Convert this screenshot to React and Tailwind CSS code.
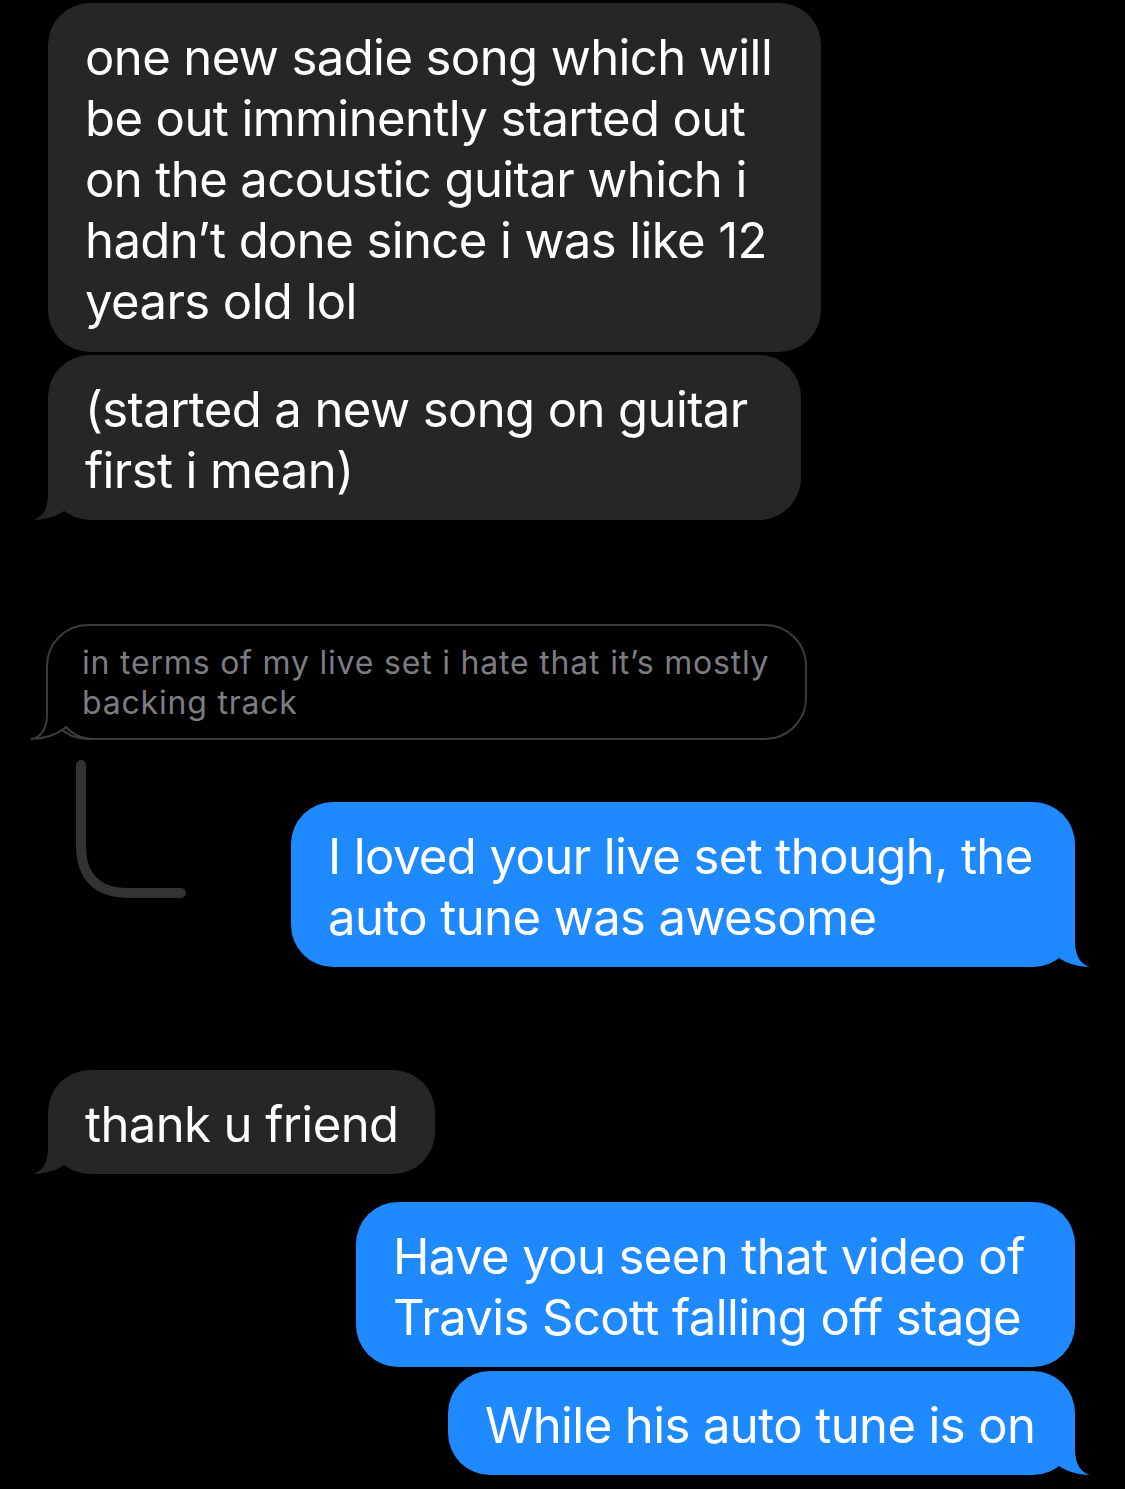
import React from 'react';

const GRAY = 'bg-[#262629]';
const BLUE = 'bg-[#1f8aff]';

const TailPath = 'M15 0 V25 C15 40 8 48 0 50 C12 50 26 46 35 38 C42 46 50 50 62 50 H80 V0 Z';

const Tail = ({ side, color }) => (
  <svg
    width="80"
    height="50"
    viewBox="0 0 80 50"
    className={
      side === 'left'
        ? 'absolute left-[-15px] bottom-0'
        : 'absolute right-[-15px] bottom-0 -scale-x-100'
    }
  >
    <path d={TailPath} fill={color} />
  </svg>
);

const Bubble = ({ lines, side = 'left', tail = false, width, className = '' }) => {
  const isLeft = side === 'left';
  return (
    <div
      className={`relative rounded-[42px] pt-[24px] pb-[19px] pl-[37px] ${
        isLeft ? `${GRAY} self-start ml-[48px]` : `${BLUE} self-end mr-[50px]`
      } ${width} ${className}`}
    >
      {tail && <Tail side={side} color={isLeft ? '#262629' : '#1f8aff'} />}
      <div className="relative text-white text-[49px] leading-[61px] tracking-[-0.012em] whitespace-nowrap">
        {lines.map((l) => (
          <div key={l}>{l}</div>
        ))}
      </div>
    </div>
  );
};

const QuotedBubble = () => (
  <div className="relative self-start ml-[46px] mt-[104px] w-[761px] rounded-[42px] border-2 border-[#3c3c3f] pt-[17px] pb-[15px] pl-[34px]">
    <svg width="80" height="50" viewBox="0 0 80 50" className="absolute left-[-17px] bottom-[-2px]">
      <path
        d="M16 0 V25 C16 40 9 48 0 49 C12 49 26 45 35 37 C42 45 50 49 62 49 H80 V0 Z"
        fill="#000"
      />
      <path
        d="M16 0 V25 C16 40 9 48 0 49 C12 49 26 45 35 37 C42 45 50 49 62 49 H80"
        fill="none"
        stroke="#3c3c3f"
        strokeWidth="2"
      />
    </svg>
    <div className="relative text-[#7c7c81] text-[32px] leading-[40px] tracking-[0.025em] whitespace-nowrap">
      <div>in terms of my live set i hate that it’s mostly</div>
      <div>backing track</div>
    </div>
  </div>
);

export default function App() {
  return (
    <div
      className="min-h-[1489px] w-full bg-black flex flex-col pt-[3px]"
      style={{ fontFamily: 'Inter, "Noto Sans", sans-serif' }}
    >
      <Bubble
        width="w-[773px]"
        className="pb-[20px]"
        lines={[
          'one new sadie song which will',
          'be out imminently started out',
          'on the acoustic guitar which i',
          'hadn’t done since i was like 12',
          'years old lol',
        ]}
      />
      <Bubble
        width="w-[753px]"
        className="mt-[3px]"
        tail
        lines={['(started a new song on guitar', 'first i mean)']}
      />

      <QuotedBubble />

      <div className="flex mt-[20px]">
        <svg width="120" height="140" viewBox="0 0 120 140" className="ml-[70px] shrink-0">
          <path
            d="M11 5 V85 Q11 133 59 133 H111"
            fill="none"
            stroke="#333335"
            strokeWidth="10"
            strokeLinecap="round"
          />
        </svg>
        <div className="flex-1 flex flex-col">
          <Bubble
            side="right"
            width="w-[784px]"
            className="mt-[42px]"
            tail
            lines={['I loved your live set though, the', 'auto tune was awesome']}
          />
        </div>
      </div>

      <Bubble width="w-[387px]" className="mt-[103px]" tail lines={['thank u friend']} />

      <Bubble
        side="right"
        width="w-[719px]"
        className="mt-[28px]"
        lines={['Have you seen that video of', 'Travis Scott falling off stage']}
      />
      <Bubble
        side="right"
        width="w-[627px]"
        className="mt-[4px]"
        tail
        lines={['While his auto tune is on']}
      />
    </div>
  );
}
